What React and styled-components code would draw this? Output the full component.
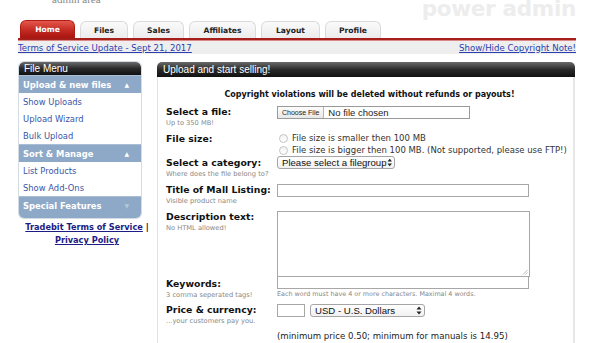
import React from "react";
import styled, { createGlobalStyle } from "styled-components";

const GlobalStyle = createGlobalStyle`
  body {
    margin: 0;
    background: #fff;
    font-family: "DejaVu Sans", Verdana, sans-serif;
  }
`;

const Page = styled.div`
  width: 558px;
  padding-left: 18px;
`;

const Masthead = styled.div`
  height: 20px;
  overflow: hidden;
  display: flex;
  justify-content: space-between;
  align-items: flex-start;
`;

const AdminArea = styled.div`
  margin: -7px 0 0 34px;
  font-family: "Liberation Serif", serif;
  font-size: 11px;
  color: #888;
`;

const PowerAdmin = styled.div`
  margin: -4px 0 0 0;
  font-family: "DejaVu Sans", sans-serif;
  font-weight: bold;
  font-size: 21.5px;
  letter-spacing: -0.3px;
  color: #ededed;
`;

const TabBar = styled.div`
  display: flex;
  gap: 5px;
  padding-left: 2px;
  height: 18px;
  align-items: flex-end;
`;

const Tab = styled.div`
  width: ${p => p.width}px;
  height: ${p => (p.active ? 18 : 17)}px;
  box-sizing: border-box;
  display: flex;
  align-items: center;
  justify-content: center;
  border-radius: 6px 6px 0 0;
  font-size: 7.6px;
  font-weight: bold;
  color: ${p => (p.active ? "#fff" : "#222")};
  background: ${p =>
    p.active
      ? "linear-gradient(#e4564b, #c22a22 55%, #a8140f)"
      : "linear-gradient(#fafafa, #ececec)"};
  border: 1px solid ${p => (p.active ? "#b31c16" : "#dadada")};
  border-bottom: none;
`;

const RedRule = styled.div`
  height: 2px;
  background: #a5201b;
  border-bottom: 1px solid #d88;
`;

const LinkBar = styled.div`
  height: 13px;
  background: #eeeeee;
  display: flex;
  justify-content: space-between;
  align-items: center;
  font-size: 8.6px;
`;

const TopLink = styled.a`
  color: #2b3fb0;
  text-decoration: underline;
`;

const Columns = styled.div`
  display: flex;
  gap: 16px;
  margin-top: 8px;
  padding-left: 1px;
`;

const Sidebar = styled.div`
  width: 122px;
  flex-shrink: 0;
`;

const MenuBox = styled.div`
  border-radius: 5px;
  overflow: hidden;
  box-shadow: 0 0 0 1px #d5dbe3;
`;

const DarkHead = styled.div`
  height: ${p => p.h}px;
  display: flex;
  align-items: center;
  padding-left: ${p => p.pad}px;
  border-radius: 5px 5px 0 0;
  background: linear-gradient(#6a6a6a, #2a2a2a 50%, #111);
  color: #fff;
  font-family: "Liberation Sans", Arial, sans-serif;
  font-size: ${p => p.fs}px;
`;

const SectionHead = styled.div`
  height: 18px;
  display: flex;
  align-items: center;
  justify-content: space-between;
  padding: 0 12px 0 4px;
  background: #8ea9c7;
  border-top: 1px solid #a9bdd4;
  box-sizing: border-box;
  color: #fff;
  font-weight: bold;
  font-size: 8.4px;
`;

const Arrow = styled.span`
  font-size: 6px;
  color: ${p => (p.dim ? "#b6c6d9" : "#fff")};
`;

const MenuItem = styled.a`
  display: flex;
  align-items: center;
  height: 17px;
  padding-left: 4px;
  background: #fff;
  color: #3756a8;
  font-size: 8.4px;
  text-decoration: none;
`;

const MenuFoot = styled.div`
  height: 4px;
  background: #8ea9c7;
`;

const Footnote = styled.div`
  margin-top: 3px;
  width: 128px;
  text-align: center;
  font-size: 8.2px;
  font-weight: bold;
  line-height: 13px;
  color: #111;
  padding-left: 4px;
  white-space: nowrap;
`;

const NavyLink = styled.a`
  color: #1c1c84;
  text-decoration: underline;
`;

const Main = styled.div`
  width: 418px;
  flex-shrink: 0;
`;

const PanelBody = styled.div`
  height: 280px;
  border-left: 1px solid #e2e2e2;
  border-right: 2px solid #e6e6e6;
  padding: 13px 0 0 8px;
  box-sizing: border-box;
`;

const Warning = styled.div`
  text-align: center;
  font-size: 8px;
  font-weight: bold;
  color: #111;
  margin-bottom: 6px;
`;

const Row = styled.div`
  display: flex;
  margin-bottom: ${p => p.gap ?? 3}px;
`;

const LabelCol = styled.div`
  width: 111px;
  flex-shrink: 0;
  padding-top: ${p => p.top ?? 0}px;
`;

const Label = styled.div`
  font-size: 9.3px;
  font-weight: bold;
  color: #111;
  line-height: 14px;
  white-space: nowrap;
`;

const Hint = styled.div`
  font-size: 6.7px;
  color: #888;
  line-height: 9px;
  white-space: nowrap;
`;

const FieldCol = styled.div`
  display: flex;
  flex-direction: column;
  padding-top: ${p => p.top ?? 0}px;
`;

const FileBox = styled.div`
  width: 193px;
  height: 13px;
  box-sizing: border-box;
  border: 1px solid #9a9a9a;
  display: flex;
  align-items: center;
  font-family: "Liberation Sans", Arial, sans-serif;
  font-size: 9.5px;
  color: #222;
`;

const ChooseBtn = styled.span`
  height: 100%;
  display: flex;
  align-items: center;
  padding: 0 4px;
  margin-right: 4px;
  font-size: 7px;
  background: linear-gradient(#fdfdfd, #e8e8e8);
  border-right: 1px solid #b5b5b5;
`;

const RadioLine = styled.div`
  display: flex;
  align-items: center;
  height: 12px;
  font-size: 8.5px;
  color: #333;
  white-space: nowrap;
`;

const RadioDot = styled.span`
  width: 7px;
  height: 7px;
  border-radius: 50%;
  border: 1px solid #c4c4c4;
  background: linear-gradient(#f2f2f2, #fff);
  margin: 0 4px 0 2px;
`;

const Select = styled.div`
  width: ${p => p.width}px;
  height: 13px;
  box-sizing: border-box;
  border: 1px solid #a5a5a5;
  border-radius: 3px;
  background: linear-gradient(#ffffff, #f1f1f1);
  display: flex;
  align-items: center;
  justify-content: space-between;
  padding: 0 2px 0 4px;
  font-family: "Liberation Sans", Arial, sans-serif;
  font-size: 9.6px;
  color: #111;
  white-space: nowrap;
`;

const TextInput = styled.div`
  width: ${p => p.width}px;
  height: ${p => p.height ?? 13}px;
  box-sizing: border-box;
  border: 1px solid #a7a7a7;
  background: #fff;
  position: relative;
`;

const Grip = styled.svg`
  position: absolute;
  right: 1px;
  bottom: 1px;
`;

const Note = styled.div`
  font-size: 6.4px;
  color: #888;
  line-height: 10px;
  white-space: nowrap;
`;

const PriceLine = styled.div`
  display: flex;
  gap: 5px;
`;

const MinNote = styled.div`
  margin-left: 111px;
  font-size: 8.6px;
  color: #222;
  white-space: nowrap;
`;

const UpDown = () => (
  <svg width="6" height="9" viewBox="0 0 6 9">
    <path d="M3 0.5 L5.5 3.5 H0.5 Z M3 8.5 L5.5 5.5 H0.5 Z" fill="#222" />
  </svg>
);

const tabs = [
  { name: "Home", width: 55, active: true },
  { name: "Files", width: 48 },
  { name: "Sales", width: 51 },
  { name: "Affiliates", width: 67 },
  { name: "Layout", width: 59 },
  { name: "Profile", width: 56 },
];

export default function App() {
  return (
    <>
      <GlobalStyle />
      <Page>
        <Masthead>
          <AdminArea>admin area</AdminArea>
          <PowerAdmin>power admin</PowerAdmin>
        </Masthead>

        <TabBar>
          {tabs.map(t => (
            <Tab key={t.name} width={t.width} active={t.active}>
              {t.name}
            </Tab>
          ))}
        </TabBar>
        <RedRule />
        <LinkBar>
          <TopLink href="#">Terms of Service Update - Sept 21, 2017</TopLink>
          <TopLink href="#">Show/Hide Copyright Note!</TopLink>
        </LinkBar>

        <Columns>
          <Sidebar>
            <MenuBox>
              <DarkHead h={13} pad={5} fs={10}>File Menu</DarkHead>
              <SectionHead>
                Upload &amp; new files <Arrow>▲</Arrow>
              </SectionHead>
              <MenuItem href="#">Show Uploads</MenuItem>
              <MenuItem href="#">Upload Wizard</MenuItem>
              <MenuItem href="#">Bulk Upload</MenuItem>
              <SectionHead>
                Sort &amp; Manage <Arrow>▲</Arrow>
              </SectionHead>
              <MenuItem href="#">List Products</MenuItem>
              <MenuItem href="#">Show Add-Ons</MenuItem>
              <SectionHead>
                Special Features <Arrow dim>▼</Arrow>
              </SectionHead>
              <MenuFoot />
            </MenuBox>
            <Footnote>
              <NavyLink href="#">Tradebit Terms of Service</NavyLink> |
              <br />
              <NavyLink href="#">Privacy Policy</NavyLink>
            </Footnote>
          </Sidebar>

          <Main>
            <DarkHead h={15} pad={6} fs={10}>Upload and start selling!</DarkHead>
            <PanelBody>
              <Warning>Copyright violations will be deleted without refunds or payouts!</Warning>

              <Row gap={4}>
                <LabelCol>
                  <Label>Select a file:</Label>
                  <Hint>Up to 350 MB!</Hint>
                </LabelCol>
                <FieldCol top={1}>
                  <FileBox>
                    <ChooseBtn>Choose File</ChooseBtn>No file chosen
                  </FileBox>
                </FieldCol>
              </Row>

              <Row gap={0}>
                <LabelCol>
                  <Label>File size:</Label>
                </LabelCol>
                <FieldCol>
                  <RadioLine>
                    <RadioDot />File size is smaller then 100 MB
                  </RadioLine>
                  <RadioLine>
                    <RadioDot />File size is bigger then 100 MB. (Not supported, please use FTP!)
                  </RadioLine>
                </FieldCol>
              </Row>

              <Row gap={4}>
                <LabelCol>
                  <Label>Select a category:</Label>
                  <Hint>Where does the file belong to?</Hint>
                </LabelCol>
                <FieldCol>
                  <Select width={118}>
                    Please select a filegroup <UpDown />
                  </Select>
                </FieldCol>
              </Row>

              <Row gap={4}>
                <LabelCol>
                  <Label>Title of Mall Listing:</Label>
                  <Hint>Visible product name</Hint>
                </LabelCol>
                <FieldCol top={1}>
                  <TextInput width={252} />
                </FieldCol>
              </Row>

              <Row gap={-1}>
                <LabelCol>
                  <Label>Description text:</Label>
                  <Hint>No HTML allowed!</Hint>
                </LabelCol>
                <FieldCol top={1}>
                  <TextInput width={253} height={66}>
                    <Grip width="6" height="6" viewBox="0 0 6 6">
                      <path d="M5.5 1 L1 5.5 M5.5 3.5 L3.5 5.5" stroke="#aaa" strokeWidth="0.8" />
                    </Grip>
                  </TextInput>
                </FieldCol>
              </Row>

              <Row gap={3}>
                <LabelCol top={1}>
                  <Label>Keywords:</Label>
                  <Hint>3 comma seperated tags!</Hint>
                </LabelCol>
                <FieldCol>
                  <TextInput width={252} />
                  <Note>Each word must have 4 or more characters. Maximal 4 words.</Note>
                </FieldCol>
              </Row>

              <Row gap={5}>
                <LabelCol>
                  <Label>Price &amp; currency:</Label>
                  <Hint>...your customers pay you.</Hint>
                </LabelCol>
                <FieldCol top={1}>
                  <PriceLine>
                    <TextInput width={28} />
                    <Select width={115}>
                      USD - U.S. Dollars <UpDown />
                    </Select>
                  </PriceLine>
                </FieldCol>
              </Row>

              <MinNote>(minimum price 0.50; minimum for manuals is 14.95)</MinNote>
            </PanelBody>
          </Main>
        </Columns>
      </Page>
    </>
  );
}
